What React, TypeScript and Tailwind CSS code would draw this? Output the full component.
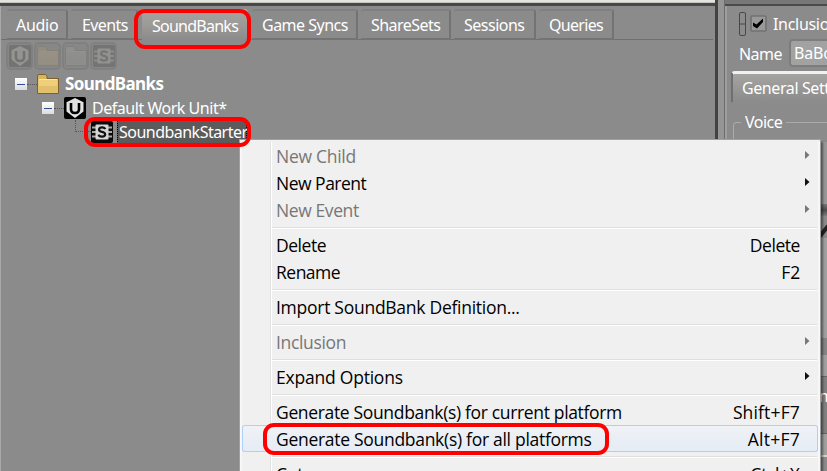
import React from "react";

const ui = "font-['Noto_Sans','Open_Sans',sans-serif]";
const menuFont = "font-['Open_Sans','Noto_Sans',sans-serif]";

function UnitIcon() {
  return (
    <svg className="shrink-0" width="22" height="22" viewBox="0 0 22 22">
      <rect width="22" height="22" rx="2" fill="#000" />
      <path d="M11 1 19.5 5.2V14.5L11 21 2.5 14.5V5.2Z" fill="#e2e2e2" />
      <path d="M7 6V12.2Q7 16 11 16T15 12.2V6" fill="none" stroke="#000" strokeWidth="2.6" />
      <path d="M11 3.5V12.5M9 6 11 3.5 13 6" fill="none" stroke="#e2e2e2" strokeWidth="1.6" />
    </svg>
  );
}

function BankIcon() {
  return (
    <svg className="shrink-0" width="22" height="22" viewBox="0 0 22 22">
      <rect width="22" height="22" rx="2" fill="#0a0a0a" />
      <path d="M1 6.5H21M1 11H21M1 15.5H21" stroke="#aaa" strokeWidth="1.8" />
      <rect x="4.5" y="3.5" width="13" height="15" rx="1" fill="#d6d6d6" />
      <path d="M14.2 8.2Q13.6 6.4 11 6.4T8 8.6Q8 10.4 11 10.9T14.2 13.3Q14.2 15.6 11 15.6T7.7 13.6" fill="none" stroke="#111" strokeWidth="2.2" />
    </svg>
  );
}

function FolderIcon({ pale = false }: { pale?: boolean }) {
  return (
    <svg className="shrink-0" width="22" height="20" viewBox="0 0 22 20">
      <path d="M.5 19.5V2Q.5.5 2 .5H8.5L10 2V4.5H21.5V19.5Z" fill={pale ? "#ccc" : "#d9b55e"} stroke={pale ? "#555" : "#7d612b"} />
      <path d="M1.5 5.5H20.5V18.5H1.5Z" fill={pale ? "#bbb" : "#f0cf7c"} />
      <path d="M2 12H20V18H2Z" fill={pale ? "#aaa" : "#d7b35d"} opacity=".55" />
      <path d="M2 5.5H20" stroke={pale ? "#ddd" : "#fbe6a4"} />
    </svg>
  );
}

function Minus() {
  return (
    <span className="flex h-3 w-3 shrink-0 items-center justify-center bg-gradient-to-b from-white to-[#dcdcdc]">
      <span className="h-px w-[8px] bg-[#2f4ea0]" />
    </span>
  );
}

const tabs = [
  { label: "Audio", w: "w-[61px]", gap: "mr-[3px]", pad: "pl-[9px]", ls: "tracking-[-0.3px]" },
  { label: "Events", w: "w-[67px]", gap: "mr-[4px]", pad: "pl-[11px]", ls: "tracking-[-0.6px]" },
  { label: "SoundBanks", w: "w-[106px]", gap: "mr-[4px]", pad: "pl-[10px]", ls: "tracking-[-0.75px]", active: true },
  { label: "Game Syncs", w: "w-[106px]", gap: "mr-[3px]", pad: "pl-[10px]", ls: "tracking-[-0.5px]" },
  { label: "ShareSets", w: "w-[90px]", gap: "mr-[3px]", pad: "pl-[10px]", ls: "tracking-[-0.55px]" },
  { label: "Sessions", w: "w-[82px]", gap: "mr-[3px]", pad: "pl-[10px]", ls: "tracking-[-0.5px]" },
  { label: "Queries", w: "w-[75px]", gap: "", pad: "pl-[10px]", ls: "tracking-[-0.7px]" },
];

type Entry = { label: string; ls?: string; hotkey?: string; kls?: string; sub?: boolean; off?: boolean; hot?: boolean } | null;

const entries: Entry[] = [
  { label: "New Child", sub: true, off: true, ls: "tracking-[-0.28px]" },
  { label: "New Parent", sub: true, ls: "tracking-[-0.5px]" },
  { label: "New Event", sub: true, off: true, ls: "tracking-[-0.4px]" },
  null,
  { label: "Delete", hotkey: "Delete", ls: "tracking-[-0.45px]", kls: "tracking-[-0.45px]" },
  { label: "Rename", hotkey: "F2", ls: "tracking-[-0.5px]", kls: "tracking-[-0.2px]" },
  null,
  { label: "Import SoundBank Definition...", ls: "tracking-[-0.27px]" },
  null,
  { label: "Inclusion", sub: true, off: true, ls: "tracking-[-0.35px]" },
  null,
  { label: "Expand Options", sub: true, ls: "tracking-[-0.22px]" },
  null,
  { label: "Generate Soundbank(s) for current platform", hotkey: "Shift+F7", ls: "tracking-[-0.34px]", kls: "tracking-[0.15px]" },
  { label: "Generate Soundbank(s) for all platforms", hotkey: "Alt+F7", hot: true, ls: "tracking-[-0.29px]", kls: "tracking-[0.25px]" },
  null,
  { label: "Cut", hotkey: "Ctrl+X", ls: "tracking-[-0.2px]", kls: "tracking-[0.15px]" },
];

function ContextMenu() {
  return (
    <div className={`absolute left-[239px] top-[139px] h-[340px] w-[582px] border border-[#a0a0a0] bg-[#f0f0f0] pt-[2px] text-[17.5px] leading-[27px] text-black shadow-[2px_3px_2px_rgba(0,0,0,0.45)] ${menuFont}`}>
      <div className="h-full border-x-2 border-[#f7f7f7]">
        {entries.map((e, i) =>
          e === null ? (
            <div key={i} className="flex h-2">
              <div className="w-[29px] border-r border-[#e2e2e2]" />
              <div className="w-px bg-white" />
              <div className="mr-px mt-[4px] h-[2px] flex-1 border-b border-t border-b-white border-t-[#dfdfdf]" />
            </div>
          ) : (
            <div key={i} className={`flex h-[27px] whitespace-pre ${e.off ? "text-[#777]" : ""} ${e.hot ? "rounded-[3px] bg-gradient-to-b from-[#f0f2f5] to-[#e5ecf6] shadow-[inset_0_0_0_1px_#aecff7]" : ""}`}>
              <div className={`w-[29px] shrink-0 ${e.hot ? "" : "border-r border-[#e2e2e2]"}`} />
              <div className={`w-px shrink-0 ${e.hot ? "" : "bg-white"}`} />
              <span className={`ml-[4px] mt-[1px] ${e.ls ?? ""}`}>{e.label}</span>
              <span className={`ml-auto mr-[18px] mt-[1px] ${e.kls ?? ""}`}>{e.hotkey}</span>
              {e.sub && (
                <svg className="-ml-[13px] mr-[8px] mt-[9px] shrink-0" width="5" height="8" viewBox="0 0 5 8">
                  <path d="M0 0 4.5 4 0 8Z" fill={e.off ? "#777" : "#111"} />
                </svg>
              )}
            </div>
          )
        )}
      </div>
    </div>
  );
}

export default function App() {
  return (
    <div className={`relative h-[471px] w-[827px] overflow-hidden bg-[#8b8b8b] text-[16px] text-white ${ui}`}>
      <div className="flex h-full">
        <div className="flex h-full w-[718px] shrink-0 flex-col border-r-[3px] border-r-[#424242]">
          <div className="h-[3px] shrink-0 border-b border-[#c4c4c0] bg-[#e4e4df]" />
          <div className="h-[3px] shrink-0 bg-[#484848]" />
          <div className="flex h-full flex-col border-l border-[#a9a9a9]">
            <div className="mr-[2px] mt-[3px] flex h-[31px] shrink-0 border-b border-[#707070] pl-[6px]">
              {tabs.map((t) => (
                <div key={t.label} className={`h-[31px] shrink-0 whitespace-nowrap ${t.w} ${t.gap} ${t.pad} ${t.ls} ${t.active ? "rounded-t border-t border-[#b4b4b2] bg-gradient-to-b from-[#a5a4a1] via-[#9b9a97] to-[#8b8b8b] leading-[32px]" : "rounded-t-[3px] border-b-2 border-r-2 border-t-2 border-b-[#747474] border-r-[#737373] border-t-[#808080] bg-[#8b8b8b] leading-[29px]"}`}>
                  {t.label}
                </div>
              ))}
            </div>
            <div className="ml-[5px] mt-[2px] flex shrink-0 gap-[1px]">
              {[<UnitIcon />, <FolderIcon />, <FolderIcon pale />, <BankIcon />].map((icon, i) => (
                <div key={i} className="flex h-[28px] w-[27px] items-center justify-center rounded-[5px] border-2 border-[#808080] bg-[#878786]">
                  <span className="opacity-[0.14]">{icon}</span>
                </div>
              ))}
            </div>
            <div className="mt-[2px] flex h-6 shrink-0 items-center pl-[14px]">
              <Minus />
              <span className="w-[10px] border-t border-dotted border-[#555]" />
              <FolderIcon />
              <span className="ml-[6px] text-[17px] font-bold tracking-[-0.6px]">SoundBanks</span>
            </div>
            <div className="flex h-6 shrink-0 items-center pl-[41px]">
              <Minus />
              <span className="w-[10px] border-t border-dotted border-[#555]" />
              <UnitIcon />
              <span className="ml-[6px] whitespace-nowrap tracking-[-0.47px]">Default Work Unit*</span>
            </div>
            <div className="flex h-6 shrink-0 items-center pl-[74px]">
              <span className="mb-[12px] h-3 w-4 border-b border-l border-dotted border-[#555]" />
              <BankIcon />
              <span className="ml-[4px] h-6 w-[130px] whitespace-nowrap border border-dotted border-black bg-[#5b5b5b] pl-[1px] leading-[22px] tracking-[-0.52px]">SoundbankStarter</span>
            </div>
          </div>
        </div>
        <div className="w-[7px] shrink-0 border-r border-[#6d6d6d] bg-[#959595]" />
        <div className="flex h-full flex-1 flex-col overflow-hidden">
          <div className="h-[6px] shrink-0 border-b-2 border-[#4a4a4a] bg-[#777]" />
          <div className="flex h-full flex-col border-l-2 border-[#9e9e9e]">
            <div className="mt-[5px] flex h-[25px] shrink-0 items-center pl-[12px]">
              <svg className="shrink-0" width="7" height="24" viewBox="0 0 7 24"><path d="M.5 2Q.5.5 2 .5H5Q6.5.5 6.5 2V22Q6.5 23.5 5 23.5H2Q.5 23.5.5 22ZM1 12H6" fill="none" stroke="#484848" /></svg>
              <svg className="ml-[4px] shrink-0" width="17" height="17" viewBox="0 0 17 17"><rect x="1" y="1" width="15" height="15" rx="1" fill="#999" stroke="#717171" strokeWidth="1.6" /><path d="M3 7.5 6.5 9.5 13 3.5V7L7 13.5 3 11Z" fill="#000" /></svg>
              <span className="ml-[6px] tracking-[-0.3px]">Inclusion</span>
            </div>
            <div className="mt-[3px] flex h-[27px] shrink-0 items-center pl-[12px]">
              <span className="mt-[2px] w-[50px] shrink-0 tracking-[-0.55px]">Name</span>
              <span className="h-[28px] w-[80px] shrink-0 rounded-l border-2 border-[#7d7d7d] bg-[#a2a2a2] pl-[3px] leading-[24px] tracking-[-0.2px]">BaBoom</span>
            </div>
            <div className="ml-[4px] mt-[5px] h-[31px] w-[120px] shrink-0 whitespace-nowrap rounded-tl border-l-2 border-t-[3px] border-l-[#6f6f6f] border-t-[#f1f1f1] bg-gradient-to-b from-[#a5a4a1] to-[#8b8b8b] pl-[9px] leading-[29px] tracking-[-0.4px]">General Settings</div>
            <fieldset className="ml-[6px] mt-[8px] h-[380px] w-[120px] shrink-0 rounded-tl border-l border-t border-[#aaa] pl-[7px]">
              <legend className="px-[4px] tracking-[-0.5px]">Voice</legend>
              <div className="ml-[78px] flex w-[30px] flex-col">
                <div className="mt-[8px] h-[62px] rounded bg-[#979797]" />
                <div className="h-[12px] bg-gradient-to-b from-[#777] via-[#4d4d4d] to-[#808080]" />
                <svg width="12" height="22" viewBox="0 0 12 22"><path d="M1 20 9 10" stroke="#222" strokeWidth="4" /></svg>
                <div className="h-[100px] rounded-b bg-[#a0a0a0]" />
                <div className="h-[17px] bg-[#858585]" />
                <div className="h-[22px] border-b border-[#666] bg-[#a0a0a0]" />
                <div className="h-[56px] bg-[#808080] pt-[7px] leading-[24px]">m</div>
                <div className="h-[24px] border-b-2 border-t border-b-[#d4d4cc] border-t-[#666] bg-[#a0a0a0]" />
              </div>
            </fieldset>
          </div>
        </div>
      </div>
      <ContextMenu />
      <div className="absolute left-[134px] top-[9px] h-[40px] w-[117px] rounded-[11px] border-4 border-[#f00]" />
      <div className="absolute left-[84px] top-[117px] h-[30px] w-[167px] rounded-[11px] border-4 border-[#f00]" />
      <div className="absolute left-[263px] top-[423px] h-[32px] w-[346px] rounded-[11px] border-4 border-[#f00]" />
    </div>
  );
}
